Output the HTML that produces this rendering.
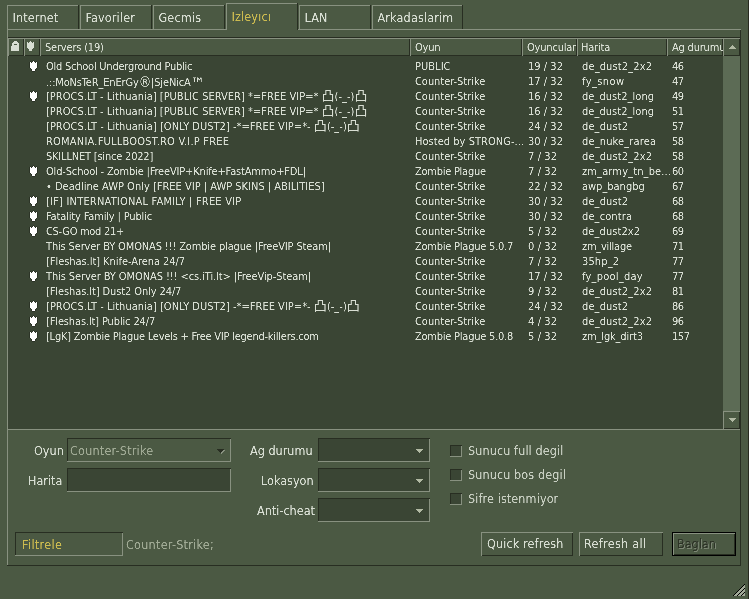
<!DOCTYPE html>
<html lang="en"><head><meta charset="utf-8"><title>Servers</title>
<style>
html,body{margin:0;padding:0}
body{width:749px;height:599px;overflow:hidden;background:#4b5943;position:relative;font-family:"DejaVu Sans Condensed","Liberation Sans","Noto Sans CJK SC",sans-serif;color:#d8ded3}
.abs,.tab,.hc,.row,.cell,.lbl,.box,.btn,.chk,.ln{position:absolute;box-sizing:border-box;white-space:pre}
.out{background:linear-gradient(#889180,#889180) 0 0/100% 1px no-repeat,linear-gradient(#889180,#889180) 0 0/1px 100% no-repeat,linear-gradient(#282e22,#282e22) 100% 0/1px 100% no-repeat,linear-gradient(#282e22,#282e22) 0 100%/100% 1px no-repeat}
.in{background:linear-gradient(#282e22,#282e22) 0 0/100% 1px no-repeat,linear-gradient(#889180,#889180) 0 100%/100% 1px no-repeat,linear-gradient(#282e22,#282e22) 0 0/1px 100% no-repeat,linear-gradient(#889180,#889180) 100% 0/1px 100% no-repeat,#3a4534}
.in.flat{background-color:#4b5943}
.tab{top:5px;height:24px;background:linear-gradient(#282e22,#282e22) 100% 0/1px 100% no-repeat,linear-gradient(#889180,#889180) 0 0/100% 1px no-repeat,linear-gradient(#889180,#889180) 0 0/1px 100% no-repeat;font-size:12.5px;line-height:15px;padding:5px 0 0 5.5px;letter-spacing:0.15px;color:#d8ded3}
.tab.act{top:3px;height:27px;padding-top:6px;color:#ccbb50;background-color:#4b5943}
.hc{top:38px;height:18px;font-size:11px;letter-spacing:-0.2px;line-height:13px;padding:3px 0 0 5px;overflow:hidden;color:#d8ded3}
.list{position:absolute;left:8px;top:56px;width:715px;height:373px;background:#3a4534}
.row{left:0;height:15px;width:715px;font-size:11px;line-height:15px;color:#d8ded3}
.cell{top:0;height:15px;overflow:hidden}
.cj{font-size:13px;line-height:13px}
.rg{font-size:14px;line-height:13px;position:relative;top:1px}
.tm{font-size:16px;line-height:13px;position:relative;top:3px}
.sh{position:absolute;display:block}
.t{filter:url(#cr);display:inline-block}
.lbl{font-size:12.5px;line-height:15px;color:#d8ded3;filter:url(#cr)}
.box{height:24px}
.btn{height:24px;font-size:12.5px;line-height:15px;padding:4px 0 0 6px;color:#d8ded3}
.chk{width:12px;height:12px}
.ln{background:#889180}
.dk{background:#282e22}
.arr{position:absolute;display:block}
</style></head><body>
<svg width="0" height="0" style="position:absolute"><filter id="cr" color-interpolation-filters="sRGB"><feComponentTransfer><feFuncA type="table" tableValues="0 0 0.55 1 1"/></feComponentTransfer></filter></svg>

<div class="ln" style="left:7px;top:29px;width:734px;height:1px"></div>
<div class="ln" style="left:7px;top:29px;width:1px;height:537px"></div>
<div class="ln dk" style="left:740px;top:30px;width:1px;height:536px"></div>
<div class="ln dk" style="left:7px;top:565px;width:734px;height:1px"></div>
<div class="tab" style="left:7px;width:72px"><span class="t">Internet</span></div>
<div class="tab" style="left:80px;width:72px"><span class="t">Favoriler</span></div>
<div class="tab" style="left:153px;width:72px"><span class="t">Gecmis</span></div>
<div class="tab act" style="left:226px;width:72px"><span class="t">Izleyıcı</span></div>
<div class="tab" style="left:299px;width:72px"><span class="t">LAN</span></div>
<div class="tab" style="left:372px;width:91px"><span class="t">Arkadaslarim</span></div>
<div class="ln dk" style="left:8px;top:37px;width:732px;height:1px"></div>
<div class="hc out" style="left:8px;width:16px;padding:0"><svg class="sh" style="left:3px;top:3px" width="8" height="10" viewBox="0 0 8 10" shape-rendering="crispEdges"><path d="M3 0h3v1h1v1h1v8h-8v-5h1v-3h1v-1h1z" fill="#d8ded3"/><rect x="3" y="3" width="3" height="1" fill="#4b5943"/></svg></div>
<div class="hc out" style="left:24px;width:16px;padding:0"><svg class="sh" style="left:2px;top:2px" width="9" height="12" viewBox="0 0 9 12" shape-rendering="crispEdges"><path d="M4 0h1v1h-1zM1 1h1v1h-1zM3 1h3v1h-3zM7 1h1v1h-1zM0 2h9v1h-9zM0 3h9v1h-9zM0 4h9v1h-9zM0 5h9v1h-9zM0 6h9v1h-9zM0 7h9v1h-9zM1 8h7v1h-7zM2 9h5v1h-5zM2 10h5v1h-5zM3 11h3v1h-3z" fill="#4b5943"/><path d="M4 1h1v1h-1zM1 2h1v1h-1zM3 2h3v1h-3zM7 2h1v1h-1zM1 3h7v1h-7zM1 4h7v1h-7zM1 5h7v1h-7zM1 6h7v1h-7zM1 7h7v1h-7zM2 8h5v1h-5zM3 9h3v1h-3zM3 10h3v1h-3z" fill="#d8ded3"/></svg></div>
<div class="hc out" style="left:40px;width:370px;"><span class="t">Servers (19)</span></div>
<div class="hc out" style="left:410px;width:112px;"><span class="t">Oyun</span></div>
<div class="hc out" style="left:522px;width:55px;"><span class="t">Oyuncular</span></div>
<div class="hc out" style="left:577px;width:90px;padding-left:4px"><span class="t">Harita</span></div>
<div class="hc out" style="left:667px;width:56px;"><span class="t">Ag durumu</span></div>
<div class="hc out" style="left:723px;width:17px;padding:0"><svg class="arr" style="left:6px;top:7px" width="7" height="4" viewBox="0 0 7 4" shape-rendering="crispEdges"><path d="M0 0h7v1h-1v1h-1v1h-1v1h-1v-1h-1v-1h-1v-1h-1z" fill="#b1b9a3" transform="matrix(1 0 0 -1 0 4)"/></svg></div>
<div class="list">
<div class="row" style="top:3px">
<svg class="sh" style="left:21px;top:1px" width="9" height="12" viewBox="0 0 9 12" shape-rendering="crispEdges"><path d="M4 0h1v1h-1zM1 1h1v1h-1zM3 1h3v1h-3zM7 1h1v1h-1zM0 2h9v1h-9zM0 3h9v1h-9zM0 4h9v1h-9zM0 5h9v1h-9zM0 6h9v1h-9zM0 7h9v1h-9zM1 8h7v1h-7zM2 9h5v1h-5zM2 10h5v1h-5zM3 11h3v1h-3z" fill="#2c3427"/><path d="M4 1h1v1h-1zM1 2h1v1h-1zM3 2h3v1h-3zM7 2h1v1h-1zM1 3h7v1h-7zM1 4h7v1h-7zM1 5h7v1h-7zM1 6h7v1h-7zM1 7h7v1h-7zM2 8h5v1h-5zM3 9h3v1h-3zM3 10h3v1h-3z" fill="#ffffff"/></svg>
<div class="cell t" style="left:38px;width:364px;letter-spacing:-0.237px">Old School Underground Public</div><div class="cell t" style="left:407px;width:109px;letter-spacing:0.031px">PUBLIC</div><div class="cell t" style="left:520px;width:54px;letter-spacing:0.031px">19 / 32</div><div class="cell t" style="left:574px;width:90px;letter-spacing:0.126px">de_dust2_2x2</div><div class="cell t" style="left:664px;width:50px;letter-spacing:-0.594px">46</div></div>
<div class="row" style="top:18px">
<div class="cell t" style="left:38px;width:364px;letter-spacing:-0.164px">.::MoNsTeR_EnErGy<span class="rg">®</span>|SjeNicA<span class="tm">™</span></div><div class="cell t" style="left:407px;width:109px;letter-spacing:-0.041px">Counter-Strike</div><div class="cell t" style="left:520px;width:54px;letter-spacing:0.031px">17 / 32</div><div class="cell t" style="left:574px;width:90px;letter-spacing:0.388px">fy_snow</div><div class="cell t" style="left:664px;width:50px;letter-spacing:-0.594px">47</div></div>
<div class="row" style="top:33px">
<svg class="sh" style="left:21px;top:1px" width="9" height="12" viewBox="0 0 9 12" shape-rendering="crispEdges"><path d="M4 0h1v1h-1zM1 1h1v1h-1zM3 1h3v1h-3zM7 1h1v1h-1zM0 2h9v1h-9zM0 3h9v1h-9zM0 4h9v1h-9zM0 5h9v1h-9zM0 6h9v1h-9zM0 7h9v1h-9zM1 8h7v1h-7zM2 9h5v1h-5zM2 10h5v1h-5zM3 11h3v1h-3z" fill="#2c3427"/><path d="M4 1h1v1h-1zM1 2h1v1h-1zM3 2h3v1h-3zM7 2h1v1h-1zM1 3h7v1h-7zM1 4h7v1h-7zM1 5h7v1h-7zM1 6h7v1h-7zM1 7h7v1h-7zM2 8h5v1h-5zM3 9h3v1h-3zM3 10h3v1h-3z" fill="#ffffff"/></svg>
<div class="cell t" style="left:38px;width:364px;letter-spacing:0.009px">[PROCS.LT - Lithuania] [PUBLIC SERVER] *=FREE VIP=* <span class="cj">凸</span>(-_-)<span class="cj">凸</span></div><div class="cell t" style="left:407px;width:109px;letter-spacing:-0.041px">Counter-Strike</div><div class="cell t" style="left:520px;width:54px;letter-spacing:0.031px">16 / 32</div><div class="cell t" style="left:574px;width:90px;letter-spacing:0.039px">de_dust2_long</div><div class="cell t" style="left:664px;width:50px;letter-spacing:-0.594px">49</div></div>
<div class="row" style="top:48px">
<div class="cell t" style="left:38px;width:364px;letter-spacing:0.009px">[PROCS.LT - Lithuania] [PUBLIC SERVER] *=FREE VIP=* <span class="cj">凸</span>(-_-)<span class="cj">凸</span></div><div class="cell t" style="left:407px;width:109px;letter-spacing:-0.041px">Counter-Strike</div><div class="cell t" style="left:520px;width:54px;letter-spacing:0.031px">16 / 32</div><div class="cell t" style="left:574px;width:90px;letter-spacing:0.039px">de_dust2_long</div><div class="cell t" style="left:664px;width:50px;letter-spacing:-0.594px">51</div></div>
<div class="row" style="top:63px">
<div class="cell t" style="left:38px;width:364px;letter-spacing:0.017px">[PROCS.LT - Lithuania] [ONLY DUST2] -*=FREE VIP=*- <span class="cj">凸</span>(-_-)<span class="cj">凸</span></div><div class="cell t" style="left:407px;width:109px;letter-spacing:-0.041px">Counter-Strike</div><div class="cell t" style="left:520px;width:54px;letter-spacing:0.031px">24 / 32</div><div class="cell t" style="left:574px;width:90px;letter-spacing:0.112px">de_dust2</div><div class="cell t" style="left:664px;width:50px;letter-spacing:-0.594px">57</div></div>
<div class="row" style="top:78px">
<div class="cell t" style="left:38px;width:364px;letter-spacing:0.205px">ROMANIA.FULLBOOST.RO V.I.P FREE</div><div class="cell t" style="left:407px;width:109px;letter-spacing:0.032px">Hosted by STRONG-...</div><div class="cell t" style="left:520px;width:54px;letter-spacing:0.031px">30 / 32</div><div class="cell t" style="left:574px;width:90px;letter-spacing:0.137px">de_nuke_rarea</div><div class="cell t" style="left:664px;width:50px;letter-spacing:-0.594px">58</div></div>
<div class="row" style="top:93px">
<div class="cell t" style="left:38px;width:364px;letter-spacing:-0.201px">SKILLNET [since 2022]</div><div class="cell t" style="left:407px;width:109px;letter-spacing:-0.041px">Counter-Strike</div><div class="cell t" style="left:520px;width:54px;letter-spacing:0.097px">7 / 32</div><div class="cell t" style="left:574px;width:90px;letter-spacing:0.126px">de_dust2_2x2</div><div class="cell t" style="left:664px;width:50px;letter-spacing:-0.594px">58</div></div>
<div class="row" style="top:108px">
<svg class="sh" style="left:21px;top:1px" width="9" height="12" viewBox="0 0 9 12" shape-rendering="crispEdges"><path d="M4 0h1v1h-1zM1 1h1v1h-1zM3 1h3v1h-3zM7 1h1v1h-1zM0 2h9v1h-9zM0 3h9v1h-9zM0 4h9v1h-9zM0 5h9v1h-9zM0 6h9v1h-9zM0 7h9v1h-9zM1 8h7v1h-7zM2 9h5v1h-5zM2 10h5v1h-5zM3 11h3v1h-3z" fill="#2c3427"/><path d="M4 1h1v1h-1zM1 2h1v1h-1zM3 2h3v1h-3zM7 2h1v1h-1zM1 3h7v1h-7zM1 4h7v1h-7zM1 5h7v1h-7zM1 6h7v1h-7zM1 7h7v1h-7zM2 8h5v1h-5zM3 9h3v1h-3zM3 10h3v1h-3z" fill="#ffffff"/></svg>
<div class="cell t" style="left:38px;width:364px;letter-spacing:-0.165px">Old-School - Zombie |FreeVIP+Knife+FastAmmo+FDL|</div><div class="cell t" style="left:407px;width:109px;letter-spacing:-0.264px">Zombie Plague</div><div class="cell t" style="left:520px;width:54px;letter-spacing:0.097px">7 / 32</div><div class="cell t" style="left:574px;width:90px;letter-spacing:0.129px">zm_army_tn_be...</div><div class="cell t" style="left:664px;width:50px;letter-spacing:-0.594px">60</div></div>
<div class="row" style="top:123px">
<div class="cell t" style="left:38px;width:364px;letter-spacing:-0.001px">• Deadline AWP Only [FREE VIP | AWP SKINS | ABILITIES]</div><div class="cell t" style="left:407px;width:109px;letter-spacing:-0.041px">Counter-Strike</div><div class="cell t" style="left:520px;width:54px;letter-spacing:0.031px">22 / 32</div><div class="cell t" style="left:574px;width:90px;letter-spacing:-0.019px">awp_bangbg</div><div class="cell t" style="left:664px;width:50px;letter-spacing:-0.594px">67</div></div>
<div class="row" style="top:138px">
<svg class="sh" style="left:21px;top:1px" width="9" height="12" viewBox="0 0 9 12" shape-rendering="crispEdges"><path d="M4 0h1v1h-1zM1 1h1v1h-1zM3 1h3v1h-3zM7 1h1v1h-1zM0 2h9v1h-9zM0 3h9v1h-9zM0 4h9v1h-9zM0 5h9v1h-9zM0 6h9v1h-9zM0 7h9v1h-9zM1 8h7v1h-7zM2 9h5v1h-5zM2 10h5v1h-5zM3 11h3v1h-3z" fill="#2c3427"/><path d="M4 1h1v1h-1zM1 2h1v1h-1zM3 2h3v1h-3zM7 2h1v1h-1zM1 3h7v1h-7zM1 4h7v1h-7zM1 5h7v1h-7zM1 6h7v1h-7zM1 7h7v1h-7zM2 8h5v1h-5zM3 9h3v1h-3zM3 10h3v1h-3z" fill="#ffffff"/></svg>
<div class="cell t" style="left:38px;width:364px;letter-spacing:0.196px">[IF] INTERNATIONAL FAMILY | FREE VIP</div><div class="cell t" style="left:407px;width:109px;letter-spacing:-0.041px">Counter-Strike</div><div class="cell t" style="left:520px;width:54px;letter-spacing:0.031px">30 / 32</div><div class="cell t" style="left:574px;width:90px;letter-spacing:0.112px">de_dust2</div><div class="cell t" style="left:664px;width:50px;letter-spacing:-0.594px">68</div></div>
<div class="row" style="top:153px">
<svg class="sh" style="left:21px;top:1px" width="9" height="12" viewBox="0 0 9 12" shape-rendering="crispEdges"><path d="M4 0h1v1h-1zM1 1h1v1h-1zM3 1h3v1h-3zM7 1h1v1h-1zM0 2h9v1h-9zM0 3h9v1h-9zM0 4h9v1h-9zM0 5h9v1h-9zM0 6h9v1h-9zM0 7h9v1h-9zM1 8h7v1h-7zM2 9h5v1h-5zM2 10h5v1h-5zM3 11h3v1h-3z" fill="#2c3427"/><path d="M4 1h1v1h-1zM1 2h1v1h-1zM3 2h3v1h-3zM7 2h1v1h-1zM1 3h7v1h-7zM1 4h7v1h-7zM1 5h7v1h-7zM1 6h7v1h-7zM1 7h7v1h-7zM2 8h5v1h-5zM3 9h3v1h-3zM3 10h3v1h-3z" fill="#ffffff"/></svg>
<div class="cell t" style="left:38px;width:364px;letter-spacing:-0.152px">Fatality Family | Public</div><div class="cell t" style="left:407px;width:109px;letter-spacing:-0.041px">Counter-Strike</div><div class="cell t" style="left:520px;width:54px;letter-spacing:0.031px">30 / 32</div><div class="cell t" style="left:574px;width:90px;letter-spacing:0.111px">de_contra</div><div class="cell t" style="left:664px;width:50px;letter-spacing:-0.594px">68</div></div>
<div class="row" style="top:168px">
<svg class="sh" style="left:21px;top:1px" width="9" height="12" viewBox="0 0 9 12" shape-rendering="crispEdges"><path d="M4 0h1v1h-1zM1 1h1v1h-1zM3 1h3v1h-3zM7 1h1v1h-1zM0 2h9v1h-9zM0 3h9v1h-9zM0 4h9v1h-9zM0 5h9v1h-9zM0 6h9v1h-9zM0 7h9v1h-9zM1 8h7v1h-7zM2 9h5v1h-5zM2 10h5v1h-5zM3 11h3v1h-3z" fill="#2c3427"/><path d="M4 1h1v1h-1zM1 2h1v1h-1zM3 2h3v1h-3zM7 2h1v1h-1zM1 3h7v1h-7zM1 4h7v1h-7zM1 5h7v1h-7zM1 6h7v1h-7zM1 7h7v1h-7zM2 8h5v1h-5zM3 9h3v1h-3zM3 10h3v1h-3z" fill="#ffffff"/></svg>
<div class="cell t" style="left:38px;width:364px;letter-spacing:-0.298px">CS-GO mod 21+</div><div class="cell t" style="left:407px;width:109px;letter-spacing:-0.041px">Counter-Strike</div><div class="cell t" style="left:520px;width:54px;letter-spacing:0.097px">5 / 32</div><div class="cell t" style="left:574px;width:90px;letter-spacing:0.071px">de_dust2x2</div><div class="cell t" style="left:664px;width:50px;letter-spacing:-0.594px">69</div></div>
<div class="row" style="top:183px">
<div class="cell t" style="left:38px;width:364px;letter-spacing:-0.149px">This Server BY OMONAS !!! Zombie plague |FreeVIP Steam|</div><div class="cell t" style="left:407px;width:109px;letter-spacing:-0.232px">Zombie Plague 5.0.7</div><div class="cell t" style="left:520px;width:54px;letter-spacing:0.097px">0 / 32</div><div class="cell t" style="left:574px;width:90px;letter-spacing:-0.259px">zm_village</div><div class="cell t" style="left:664px;width:50px;letter-spacing:-0.594px">71</div></div>
<div class="row" style="top:198px">
<div class="cell t" style="left:38px;width:364px;letter-spacing:-0.054px">[Fleshas.lt] Knife-Arena 24/7</div><div class="cell t" style="left:407px;width:109px;letter-spacing:-0.041px">Counter-Strike</div><div class="cell t" style="left:520px;width:54px;letter-spacing:0.097px">7 / 32</div><div class="cell t" style="left:574px;width:90px;letter-spacing:0.122px">35hp_2</div><div class="cell t" style="left:664px;width:50px;letter-spacing:-0.594px">77</div></div>
<div class="row" style="top:213px">
<svg class="sh" style="left:21px;top:1px" width="9" height="12" viewBox="0 0 9 12" shape-rendering="crispEdges"><path d="M4 0h1v1h-1zM1 1h1v1h-1zM3 1h3v1h-3zM7 1h1v1h-1zM0 2h9v1h-9zM0 3h9v1h-9zM0 4h9v1h-9zM0 5h9v1h-9zM0 6h9v1h-9zM0 7h9v1h-9zM1 8h7v1h-7zM2 9h5v1h-5zM2 10h5v1h-5zM3 11h3v1h-3z" fill="#2c3427"/><path d="M4 1h1v1h-1zM1 2h1v1h-1zM3 2h3v1h-3zM7 2h1v1h-1zM1 3h7v1h-7zM1 4h7v1h-7zM1 5h7v1h-7zM1 6h7v1h-7zM1 7h7v1h-7zM2 8h5v1h-5zM3 9h3v1h-3zM3 10h3v1h-3z" fill="#ffffff"/></svg>
<div class="cell t" style="left:38px;width:364px;letter-spacing:-0.098px">This Server BY OMONAS !!! &lt;cs.iTi.lt&gt; |FreeVip-Steam|</div><div class="cell t" style="left:407px;width:109px;letter-spacing:-0.041px">Counter-Strike</div><div class="cell t" style="left:520px;width:54px;letter-spacing:0.031px">17 / 32</div><div class="cell t" style="left:574px;width:90px;letter-spacing:0.231px">fy_pool_day</div><div class="cell t" style="left:664px;width:50px;letter-spacing:-0.594px">77</div></div>
<div class="row" style="top:228px">
<div class="cell t" style="left:38px;width:364px;letter-spacing:-0.104px">[Fleshas.lt] Dust2 Only 24/7</div><div class="cell t" style="left:407px;width:109px;letter-spacing:-0.041px">Counter-Strike</div><div class="cell t" style="left:520px;width:54px;letter-spacing:0.097px">9 / 32</div><div class="cell t" style="left:574px;width:90px;letter-spacing:0.126px">de_dust2_2x2</div><div class="cell t" style="left:664px;width:50px;letter-spacing:-0.594px">81</div></div>
<div class="row" style="top:243px">
<svg class="sh" style="left:21px;top:1px" width="9" height="12" viewBox="0 0 9 12" shape-rendering="crispEdges"><path d="M4 0h1v1h-1zM1 1h1v1h-1zM3 1h3v1h-3zM7 1h1v1h-1zM0 2h9v1h-9zM0 3h9v1h-9zM0 4h9v1h-9zM0 5h9v1h-9zM0 6h9v1h-9zM0 7h9v1h-9zM1 8h7v1h-7zM2 9h5v1h-5zM2 10h5v1h-5zM3 11h3v1h-3z" fill="#2c3427"/><path d="M4 1h1v1h-1zM1 2h1v1h-1zM3 2h3v1h-3zM7 2h1v1h-1zM1 3h7v1h-7zM1 4h7v1h-7zM1 5h7v1h-7zM1 6h7v1h-7zM1 7h7v1h-7zM2 8h5v1h-5zM3 9h3v1h-3zM3 10h3v1h-3z" fill="#ffffff"/></svg>
<div class="cell t" style="left:38px;width:364px;letter-spacing:0.017px">[PROCS.LT - Lithuania] [ONLY DUST2] -*=FREE VIP=*- <span class="cj">凸</span>(-_-)<span class="cj">凸</span></div><div class="cell t" style="left:407px;width:109px;letter-spacing:-0.041px">Counter-Strike</div><div class="cell t" style="left:520px;width:54px;letter-spacing:0.031px">24 / 32</div><div class="cell t" style="left:574px;width:90px;letter-spacing:0.112px">de_dust2</div><div class="cell t" style="left:664px;width:50px;letter-spacing:-0.594px">86</div></div>
<div class="row" style="top:258px">
<svg class="sh" style="left:21px;top:1px" width="9" height="12" viewBox="0 0 9 12" shape-rendering="crispEdges"><path d="M4 0h1v1h-1zM1 1h1v1h-1zM3 1h3v1h-3zM7 1h1v1h-1zM0 2h9v1h-9zM0 3h9v1h-9zM0 4h9v1h-9zM0 5h9v1h-9zM0 6h9v1h-9zM0 7h9v1h-9zM1 8h7v1h-7zM2 9h5v1h-5zM2 10h5v1h-5zM3 11h3v1h-3z" fill="#2c3427"/><path d="M4 1h1v1h-1zM1 2h1v1h-1zM3 2h3v1h-3zM7 2h1v1h-1zM1 3h7v1h-7zM1 4h7v1h-7zM1 5h7v1h-7zM1 6h7v1h-7zM1 7h7v1h-7zM2 8h5v1h-5zM3 9h3v1h-3zM3 10h3v1h-3z" fill="#ffffff"/></svg>
<div class="cell t" style="left:38px;width:364px;letter-spacing:-0.142px">[Fleshas.lt] Public 24/7</div><div class="cell t" style="left:407px;width:109px;letter-spacing:-0.041px">Counter-Strike</div><div class="cell t" style="left:520px;width:54px;letter-spacing:0.097px">4 / 32</div><div class="cell t" style="left:574px;width:90px;letter-spacing:0.126px">de_dust2_2x2</div><div class="cell t" style="left:664px;width:50px;letter-spacing:-0.594px">96</div></div>
<div class="row" style="top:273px">
<svg class="sh" style="left:21px;top:1px" width="9" height="12" viewBox="0 0 9 12" shape-rendering="crispEdges"><path d="M4 0h1v1h-1zM1 1h1v1h-1zM3 1h3v1h-3zM7 1h1v1h-1zM0 2h9v1h-9zM0 3h9v1h-9zM0 4h9v1h-9zM0 5h9v1h-9zM0 6h9v1h-9zM0 7h9v1h-9zM1 8h7v1h-7zM2 9h5v1h-5zM2 10h5v1h-5zM3 11h3v1h-3z" fill="#2c3427"/><path d="M4 1h1v1h-1zM1 2h1v1h-1zM3 2h3v1h-3zM7 2h1v1h-1zM1 3h7v1h-7zM1 4h7v1h-7zM1 5h7v1h-7zM1 6h7v1h-7zM1 7h7v1h-7zM2 8h5v1h-5zM3 9h3v1h-3zM3 10h3v1h-3z" fill="#ffffff"/></svg>
<div class="cell t" style="left:38px;width:364px;letter-spacing:-0.237px">[LgK] Zombie Plague Levels + Free VIP legend-killers.com</div><div class="cell t" style="left:407px;width:109px;letter-spacing:-0.232px">Zombie Plague 5.0.8</div><div class="cell t" style="left:520px;width:54px;letter-spacing:0.097px">5 / 32</div><div class="cell t" style="left:574px;width:90px;letter-spacing:-0.162px">zm_lgk_dirt3</div><div class="cell t" style="left:664px;width:50px;letter-spacing:-0.445px">157</div></div>
</div>
<div class="ln" style="left:8px;top:429px;width:732px;height:1px"></div>
<div class="abs" style="left:723px;top:56px;width:17px;height:355px;background:#5c6b55"></div>
<div class="abs out" style="left:723px;top:411px;width:17px;height:18px;background-color:#4b5943"><svg class="arr" style="left:6px;top:7px" width="7" height="4" viewBox="0 0 7 4" shape-rendering="crispEdges"><path d="M0 0h7v1h-1v1h-1v1h-1v1h-1v-1h-1v-1h-1v-1h-1z" fill="#b1b9a3"/></svg></div>
<div class="lbl" style="left:34px;top:443px">Oyun</div>
<div class="box in flat" style="left:67px;top:438px;width:164px"><span class="lbl" style="left:3px;top:5px;color:#a0aa95;letter-spacing:0.2px">Counter-Strike</span><svg class="arr" style="left:151px;top:12px" width="7" height="4" viewBox="0 0 7 4" shape-rendering="crispEdges"><path d="M0 0h7v1h-1v1h-1v1h-1v1h-1v-1h-1v-1h-1v-1h-1z" fill="#889180"/></svg><svg class="arr" style="left:150px;top:11px" width="7" height="4" viewBox="0 0 7 4" shape-rendering="crispEdges"><path d="M0 0h7v1h-1v1h-1v1h-1v1h-1v-1h-1v-1h-1v-1h-1z" fill="#282e22"/></svg></div>
<div class="lbl" style="left:28px;top:473px">Harita</div>
<div class="box in" style="left:67px;top:468px;width:164px"></div>
<div class="lbl" style="left:250px;top:443px">Ag durumu</div>
<div class="box in" style="left:318px;top:438px;width:112px"><svg class="arr" style="left:98px;top:11px" width="7" height="4" viewBox="0 0 7 4" shape-rendering="crispEdges"><path d="M0 0h7v1h-1v1h-1v1h-1v1h-1v-1h-1v-1h-1v-1h-1z" fill="#b1b9a3"/></svg></div>
<div class="lbl" style="left:261px;top:473px">Lokasyon</div>
<div class="box in" style="left:318px;top:468px;width:112px"><svg class="arr" style="left:98px;top:11px" width="7" height="4" viewBox="0 0 7 4" shape-rendering="crispEdges"><path d="M0 0h7v1h-1v1h-1v1h-1v1h-1v-1h-1v-1h-1v-1h-1z" fill="#b1b9a3"/></svg></div>
<div class="lbl" style="left:257px;top:503px">Anti-cheat</div>
<div class="box in" style="left:318px;top:498px;width:112px"><svg class="arr" style="left:98px;top:11px" width="7" height="4" viewBox="0 0 7 4" shape-rendering="crispEdges"><path d="M0 0h7v1h-1v1h-1v1h-1v1h-1v-1h-1v-1h-1v-1h-1z" fill="#b1b9a3"/></svg></div>
<div class="chk in" style="left:450px;top:445px"></div><div class="lbl" style="left:468px;top:443px;color:#c8cfc2;letter-spacing:0.1px">Sunucu full degil</div>
<div class="chk in" style="left:450px;top:469px"></div><div class="lbl" style="left:468px;top:467px;color:#c8cfc2;letter-spacing:0.1px">Sunucu bos degil</div>
<div class="chk in" style="left:450px;top:493px"></div><div class="lbl" style="left:468px;top:491px;color:#c8cfc2;letter-spacing:0.1px">Sifre istenmiyor</div>
<div class="box in flat" style="left:15px;top:532px;width:108px"><span class="lbl" style="left:7px;top:5px;color:#ccbb50;letter-spacing:0.35px">Filtrele</span></div>
<div class="lbl" style="left:126px;top:537px;color:#a0aa95;letter-spacing:0.25px">Counter-Strike;</div>
<div class="btn out" style="left:481px;top:532px;width:92px"><span class="t" style='letter-spacing:0.12px'>Quick refresh</span></div>
<div class="btn out" style="left:579px;top:532px;width:84px;padding-left:5px"><span class="t" style='letter-spacing:0.3px'>Refresh all</span></div>
<div class="abs" style="left:672px;top:532px;width:64px;height:24px;background:#000"><div class="btn out" style="left:1px;top:1px;width:62px;height:22px;padding:3px 0 0 4px;color:#2c3326;background-color:#4b5943"><span class="t" style='text-shadow:1px 1px 0 #7d8775'>Baglan</span></div></div>
<svg class="abs" style="left:733px;top:584px" width="12" height="12" viewBox="0 0 12 12" shape-rendering="crispEdges"><rect x="11" y="0" width="1" height="1" fill="#000"/><rect x="10" y="1" width="1" height="1" fill="#000"/><rect x="11" y="1" width="1" height="1" fill="#a0a896"/><rect x="9" y="2" width="1" height="1" fill="#000"/><rect x="10" y="2" width="1" height="1" fill="#a0a896"/><rect x="11" y="2" width="1" height="1" fill="#a0a896"/><rect x="8" y="3" width="1" height="1" fill="#000"/><rect x="9" y="3" width="1" height="1" fill="#a0a896"/><rect x="10" y="3" width="1" height="1" fill="#a0a896"/><rect x="11" y="3" width="1" height="1" fill="#a0a896"/><rect x="7" y="4" width="1" height="1" fill="#000"/><rect x="8" y="4" width="1" height="1" fill="#a0a896"/><rect x="9" y="4" width="1" height="1" fill="#a0a896"/><rect x="10" y="4" width="1" height="1" fill="#a0a896"/><rect x="11" y="4" width="1" height="1" fill="#000"/><rect x="6" y="5" width="1" height="1" fill="#000"/><rect x="7" y="5" width="1" height="1" fill="#a0a896"/><rect x="8" y="5" width="1" height="1" fill="#a0a896"/><rect x="9" y="5" width="1" height="1" fill="#a0a896"/><rect x="10" y="5" width="1" height="1" fill="#000"/><rect x="11" y="5" width="1" height="1" fill="#a0a896"/><rect x="5" y="6" width="1" height="1" fill="#000"/><rect x="6" y="6" width="1" height="1" fill="#a0a896"/><rect x="7" y="6" width="1" height="1" fill="#a0a896"/><rect x="8" y="6" width="1" height="1" fill="#a0a896"/><rect x="9" y="6" width="1" height="1" fill="#000"/><rect x="10" y="6" width="1" height="1" fill="#a0a896"/><rect x="11" y="6" width="1" height="1" fill="#a0a896"/><rect x="4" y="7" width="1" height="1" fill="#000"/><rect x="5" y="7" width="1" height="1" fill="#a0a896"/><rect x="6" y="7" width="1" height="1" fill="#a0a896"/><rect x="7" y="7" width="1" height="1" fill="#a0a896"/><rect x="8" y="7" width="1" height="1" fill="#000"/><rect x="9" y="7" width="1" height="1" fill="#a0a896"/><rect x="10" y="7" width="1" height="1" fill="#a0a896"/><rect x="11" y="7" width="1" height="1" fill="#a0a896"/><rect x="3" y="8" width="1" height="1" fill="#000"/><rect x="4" y="8" width="1" height="1" fill="#a0a896"/><rect x="5" y="8" width="1" height="1" fill="#a0a896"/><rect x="6" y="8" width="1" height="1" fill="#a0a896"/><rect x="7" y="8" width="1" height="1" fill="#000"/><rect x="8" y="8" width="1" height="1" fill="#a0a896"/><rect x="9" y="8" width="1" height="1" fill="#a0a896"/><rect x="10" y="8" width="1" height="1" fill="#a0a896"/><rect x="11" y="8" width="1" height="1" fill="#000"/><rect x="2" y="9" width="1" height="1" fill="#000"/><rect x="3" y="9" width="1" height="1" fill="#a0a896"/><rect x="4" y="9" width="1" height="1" fill="#a0a896"/><rect x="5" y="9" width="1" height="1" fill="#a0a896"/><rect x="6" y="9" width="1" height="1" fill="#000"/><rect x="7" y="9" width="1" height="1" fill="#a0a896"/><rect x="8" y="9" width="1" height="1" fill="#a0a896"/><rect x="9" y="9" width="1" height="1" fill="#a0a896"/><rect x="10" y="9" width="1" height="1" fill="#000"/><rect x="11" y="9" width="1" height="1" fill="#a0a896"/><rect x="1" y="10" width="1" height="1" fill="#000"/><rect x="2" y="10" width="1" height="1" fill="#a0a896"/><rect x="3" y="10" width="1" height="1" fill="#a0a896"/><rect x="4" y="10" width="1" height="1" fill="#a0a896"/><rect x="5" y="10" width="1" height="1" fill="#000"/><rect x="6" y="10" width="1" height="1" fill="#a0a896"/><rect x="7" y="10" width="1" height="1" fill="#a0a896"/><rect x="8" y="10" width="1" height="1" fill="#a0a896"/><rect x="9" y="10" width="1" height="1" fill="#000"/><rect x="10" y="10" width="1" height="1" fill="#a0a896"/><rect x="11" y="10" width="1" height="1" fill="#a0a896"/><rect x="0" y="11" width="1" height="1" fill="#000"/><rect x="1" y="11" width="1" height="1" fill="#a0a896"/><rect x="2" y="11" width="1" height="1" fill="#a0a896"/><rect x="3" y="11" width="1" height="1" fill="#a0a896"/><rect x="4" y="11" width="1" height="1" fill="#000"/><rect x="5" y="11" width="1" height="1" fill="#a0a896"/><rect x="6" y="11" width="1" height="1" fill="#a0a896"/><rect x="7" y="11" width="1" height="1" fill="#a0a896"/><rect x="8" y="11" width="1" height="1" fill="#000"/><rect x="9" y="11" width="1" height="1" fill="#a0a896"/><rect x="10" y="11" width="1" height="1" fill="#a0a896"/><rect x="11" y="11" width="1" height="1" fill="#a0a896"/></svg>
<div class="ln" style="left:748px;top:0;width:1px;height:599px;background:#282a20"></div>
</body></html>
